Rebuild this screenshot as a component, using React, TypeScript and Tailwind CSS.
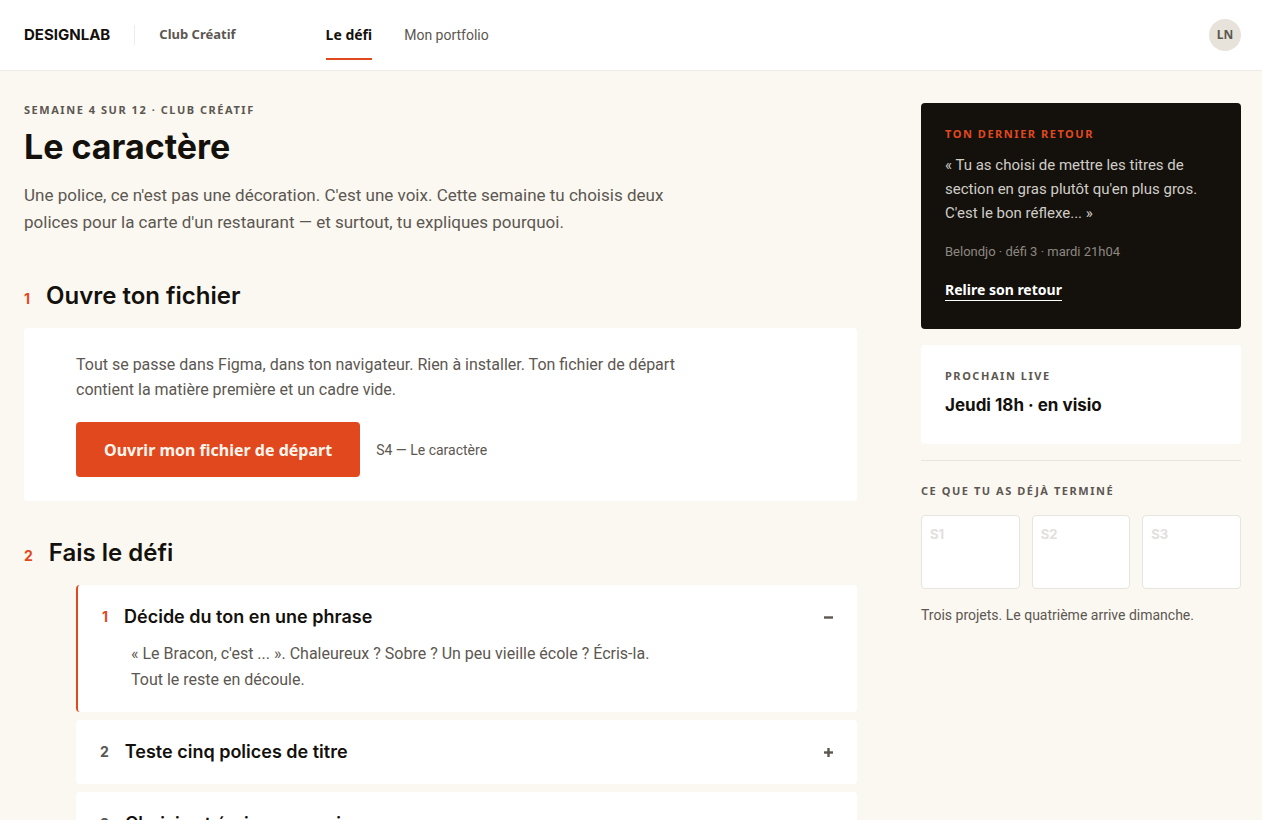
import { useState } from "react";

type Step = {
  id: number;
  title: string;
  lines: string[];
};

const steps: Step[] = [
  {
    id: 1,
    title: "Décide du ton en une phrase",
    lines: ["« Le Bracon, c'est ... ». Chaleureux ? Sobre ? Un peu vieille école ? Écris-la.", "Tout le reste en découle."],
  },
  { id: 2, title: "Teste cinq polices de titre", lines: [] },
  { id: 3, title: "Choisis et écris pourquoi", lines: [] },
];

const projects: string[] = ["S1", "S2", "S3"];

const Header: React.FC = () => {
  return (
    <header className="flex h-[71px] items-center border-b border-[#eeece8] bg-white pl-6 pr-[21px]">
      <a href="#" className="font-['Inter'] text-[15px] font-bold text-[#14110d]">DESIGNLAB</a>
      <span className="mx-6 h-5 w-px bg-[#eeece8]"></span>
      <p className="font-['Noto_Sans'] text-[13px] font-bold text-[#5c5751]">Club Créatif</p>
      <nav className="ml-[90px] flex gap-8 text-sm">
        <a href="#" aria-current="page" className="mt-[2px] border-b-2 border-[#e2481d] py-[13px] font-['Noto_Sans'] font-bold text-[#14110d]">Le défi</a>
        <a href="#" className="py-[15px] text-[#5c5751]">Mon portfolio</a>
      </nav>
      <button aria-label="Profil" className="ml-auto size-8 rounded-full bg-[#e8e3da] font-['Noto_Sans'] text-xs font-bold text-[#5c5751]">LN</button>
    </header>
  )
}

type LabelProps = {
  text: string;
  accent?: boolean;
};

const Label: React.FC<LabelProps> = ({text, accent}) => {
  return (
    <p className={`font-['Noto_Sans'] text-[11px] font-bold uppercase leading-[14px] tracking-[0.14em] ${accent ? "text-[#e2481d]" : "text-[#5c5751]"}`}>{text}</p>
  )
}

type StepCardProps = {
  step: Step;
  open: boolean;
  onToggle: () => void;
};

const StepCard: React.FC<StepCardProps> = ({step, open, onToggle}) => {
  return (
    <li className={`rounded bg-white ${open ? "border-l-2 border-[#e2481d]" : ""}`}>
      <button
        onClick={onToggle}
        aria-expanded={open}
        className={`flex w-full items-center gap-4 pl-6 pr-6 pt-[18px] text-left font-['Inter'] font-semibold ${open ? "" : "pb-[18px]"}`}
      >
        <span className={`text-sm font-bold ${open ? "text-[#e2481d]" : "text-[#5c5751]"}`}>{step.id}</span>
        <span className="text-lg leading-7 text-[#14110d]">{step.title}</span>
        <span className="ml-auto text-[#5c5751]">
          <svg width="9" height="9" viewBox="0 0 9 9" stroke="currentColor" strokeWidth="2.4">
            <path d="M0 4.5h9" />
            {open ? null : <path d="M4.5 0v9" />}
          </svg>
        </span>
      </button>
      {open && step.lines.length > 0 ?
        <div className="pb-[19px] pl-[53px] pr-6 pt-2.5 text-base leading-[26px] text-[#5c5751]">
          {step.lines.map((line) => <p key={line}>{line}</p>)}
        </div>
      :
        null
      }
    </li>
  )
}

const Sidebar: React.FC = () => {
  return (
    <aside>
      <section className="rounded bg-[#14110d] px-6 pb-7 pt-6">
        <Label text="Ton dernier retour" accent />
        <p className="mt-3 text-[15px] leading-6 text-[#d0cdc7]">
          « Tu as choisi de mettre les titres de<br />section en gras plutôt qu'en plus gros.<br />C'est le bon réflexe... »
        </p>
        <p className="mt-[17px] text-[13px] leading-5 text-[#8d8881]">Belondjo · défi 3 · mardi 21h04</p>
        <a href="#" className="mt-[18px] block w-fit border-b border-white font-['Noto_Sans'] text-sm font-bold leading-5 text-white">Relire son retour</a>
      </section>
      <section className="mt-4 rounded bg-white px-6 pb-[27px] pt-6">
        <Label text="Prochain live" />
        <p className="mt-2.5 font-['Inter'] text-[17px] font-bold leading-6 text-[#14110d]">Jeudi 18h · en visio</p>
      </section>
      <section className="mt-4 border-t border-[#e8e5df] pt-[23px]">
        <Label text="Ce que tu as déjà terminé" />
        <ul className="mt-[17px] grid grid-cols-3 gap-3">
          {projects.map((project) => (
            <li key={project} className="h-[74px] rounded border border-[#e8e5df] bg-white px-2 py-2 font-['Inter'] text-[13px] font-bold leading-5 text-[#e2e0dc]">{project}</li>
          ))}
        </ul>
        <p className="mt-4 text-sm text-[#5c5751]">Trois projets. Le quatrième arrive dimanche.</p>
      </section>
    </aside>
  )
}

const App: React.FC = () => {
  const [openStep, setOpenStep] = useState<number>(1)

  function handleToggle(id: number) {
    setOpenStep(openStep === id ? 0 : id)
  }

  return (
    <div className="h-screen overflow-hidden bg-[#fbf8f1] font-['Roboto',sans-serif] text-[#14110d]">
      <Header />
      <div className="grid grid-cols-[1fr_320px] gap-16 pl-6 pr-[21px] pt-8">
        <main>
          <Label text="Semaine 4 sur 12 · Club Créatif" />
          <h1 className="mt-2.5 font-['Inter'] text-[34px] font-bold leading-10">Le caractère</h1>
          <p className="mt-[15px] text-[17px] leading-[27px] text-[#5c5751]">
            Une police, ce n'est pas une décoration. C'est une voix. Cette semaine tu choisis deux<br />polices pour la carte d'un restaurant — et surtout, tu expliques pourquoi.
          </p>

          <section className="mt-11">
            <h2 className="flex items-baseline gap-4 font-['Inter'] text-2xl font-semibold">
              <span className="text-sm font-bold text-[#e2481d]">1</span>
              Ouvre ton fichier
            </h2>
            <div className="mt-4 rounded bg-white pb-6 pl-[52px] pr-6 pt-6">
              <p className="text-base leading-[25px] text-[#5c5751]">
                Tout se passe dans Figma, dans ton navigateur. Rien à installer. Ton fichier de départ<br />contient la matière première et un cadre vide.
              </p>
              <div className="mt-5 flex items-center gap-4">
                <button className="h-[55px] rounded bg-[#e2481d] px-7 font-['Noto_Sans'] text-base font-bold text-[#fdf6ee]">Ouvrir mon fichier de départ</button>
                <span className="text-sm text-[#5c5751]">S4 — Le caractère</span>
              </div>
            </div>
          </section>

          <section className="mt-9">
            <h2 className="flex items-baseline gap-4 font-['Inter'] text-2xl font-semibold">
              <span className="text-sm font-bold text-[#e2481d]">2</span>
              Fais le défi
            </h2>
            <ol className="ml-[52px] mt-4 flex flex-col gap-2">
              {steps.map((step) => (
                <StepCard key={step.id} step={step} open={openStep === step.id} onToggle={() => handleToggle(step.id)} />
              ))}
            </ol>
          </section>
        </main>
        <Sidebar />
      </div>
    </div>
  )
}

export default App
